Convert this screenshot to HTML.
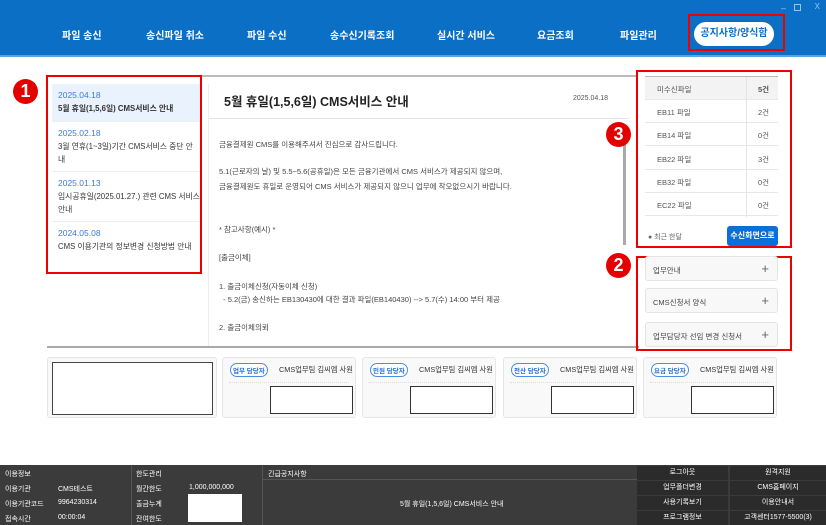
<!DOCTYPE html>
<html><head><meta charset="utf-8"><style>
*{margin:0;padding:0;box-sizing:border-box}
body{width:826px;height:525px;position:relative;overflow:hidden;background:#fff;font-family:"Liberation Sans","Noto Sans CJK KR",sans-serif;color:#333}
.a{position:absolute}
.nav{left:0;top:0;width:826px;height:57px;background:#0b70c5;border-bottom:2px solid #5aa2e0}
.ni{position:absolute;top:27px;color:#fff;font-size:10px;font-weight:bold;white-space:nowrap}
.red{border:2px solid #e00;position:absolute}
.badge{position:absolute;width:25px;height:25px;border-radius:50%;background:#e50000;color:#fff;font-weight:bold;font-size:18px;text-align:center;line-height:25px}
.li{position:absolute;left:52px;width:148px;font-size:7.8px;line-height:13px;padding:5px 4px 5px 6px;border-bottom:1px solid #eee;white-space:nowrap;overflow:hidden}
.li .d{color:#3a7bd5;font-size:8.5px}
.ct{font-size:7.5px;color:#444;position:absolute;left:219px;white-space:nowrap}
.tr{position:absolute;left:645px;width:133px;height:23px;border-bottom:1px solid #e8e8e8;font-size:7.5px;color:#555}
.tr span{position:absolute;top:7px}
.acc{position:absolute;left:645px;width:133px;height:25px;border:1px solid #e4e4e4;border-radius:3px;background:#f8f8f8;font-size:7.5px;color:#444;padding:8px 0 0 7px}
.acc b{position:absolute;right:8px;top:4px;font-weight:normal;font-size:13px;color:#666}
.card{position:absolute;top:357px;height:61px;border:1px solid #e6e6e6;border-radius:3px;background:#f9f9f9}
.pill{position:absolute;left:7px;top:5px;border:1px solid #4a8ee0;border-radius:7px;color:#2a6fc9;font-size:6.5px;padding:1px 2px;background:#fff;font-weight:bold}
.cn{position:absolute;left:56px;top:7px;font-size:7.3px;color:#333;white-space:nowrap}
.dl{position:absolute;left:6px;right:6px;top:24px;border-top:1px dotted #ddd}
.ib{position:absolute;right:2px;top:28px;width:83px;height:28px;border:1px solid #333;background:#fff}
.ft{left:0;top:465px;width:826px;height:60px;background:#3b3b3b;color:#fff;font-size:7px}
.fc{position:absolute;white-space:nowrap}
.fb{position:absolute;background:#2b2b2b;text-align:center;line-height:14px;color:#fff;font-size:7px}
</style></head><body>
<div class="a nav">
<div class="a" style="right:40px;top:3px;color:#9cc4ea;font-size:9px">–</div>
<div class="a" style="right:25px;top:4px;width:7px;height:7px;border:1px solid #9cc4ea"></div>
<div class="a" style="right:6px;top:2px;color:#9cc4ea;font-size:8px">X</div>
<div class="ni" style="left:62px">파일 송신</div>
<div class="ni" style="left:146px">송신파일 취소</div>
<div class="ni" style="left:247px">파일 수신</div>
<div class="ni" style="left:330px">송수신기록조회</div>
<div class="ni" style="left:437px">실시간 서비스</div>
<div class="ni" style="left:537px">요금조회</div>
<div class="ni" style="left:620px">파일관리</div>
<div class="a" style="left:694px;top:22px;width:80px;height:24px;background:#fff;border-radius:12px;color:#0b70c5;font-size:10px;font-weight:bold;text-align:center;line-height:24px">공지사항/양식함</div>
<div class="red" style="left:688px;top:14px;width:97px;height:37px"></div>
</div>

<div class="badge" style="left:13px;top:79px">1</div>
<div class="red" style="left:46px;top:75px;width:156px;height:199px"></div>
<div class="li" style="top:84px;background:#eaf2fd;height:38px"><div class="d">2025.04.18</div><b>5월 휴일(1,5,6일) CMS서비스 안내</b></div>
<div class="li" style="top:122px;height:50px"><div class="d">2025.02.18</div>3월 연휴(1~3일)기간 CMS서비스 중단 안<br>내</div>
<div class="li" style="top:172px;height:50px"><div class="d">2025.01.13</div>임시공휴일(2025.01.27.) 관련 CMS 서비스<br>안내</div>
<div class="li" style="top:222px;height:40px;border:0"><div class="d">2024.05.08</div>CMS 이용기관의 정보변경 신청방법 안내</div>

<div class="a" style="left:202px;top:75px;width:436px;border-top:2px solid #bbb"></div>
<div class="a" style="left:208px;top:84px;width:1px;height:262px;background:#eee"></div>
<div class="a" style="left:224px;top:91px;font-size:12.5px;font-weight:bold;color:#222">5월 휴일(1,5,6일) CMS서비스 안내</div>
<div class="a" style="left:573px;top:95px;font-size:7px;color:#555">2025.04.18</div>
<div class="a" style="left:209px;top:118px;width:420px;border-top:1px solid #e4e4e4"></div>
<div class="ct" style="top:139px">금융결제원 CMS를 이용해주셔서 진심으로 감사드립니다.</div>
<div class="ct" style="top:166px">5.1(근로자의 날) 및 5.5~5.6(공휴일)은 모든 금융기관에서 CMS 서비스가 제공되지 않으며,</div>
<div class="ct" style="top:181px">금융결제원도 휴일로 운영되어 CMS 서비스가 제공되지 않으니 업무에 착오없으시기 바랍니다.</div>
<div class="ct" style="top:224px">* 참고사항(예시) *</div>
<div class="ct" style="top:252px">[출금이체]</div>
<div class="ct" style="top:281px">1. 출금이체신청(자동이체 신청)</div>
<div class="ct" style="top:294px">&nbsp;&nbsp;- 5.2(금) 송신하는 EB130430에 대한 결과 파일(EB140430) --&gt; 5.7(수) 14:00 부터 제공</div>
<div class="ct" style="top:322px">2. 출금이체의뢰</div>
<div class="a" style="left:623px;top:145px;width:3px;height:100px;background:#aaa"></div>
<div class="a" style="left:47px;top:346px;width:592px;border-top:2px solid #aaa"></div>

<div class="badge" style="left:606px;top:122px">3</div>
<div class="red" style="left:636px;top:70px;width:156px;height:178px"></div>
<div class="a" style="left:645px;top:76px;width:133px;border-top:2px solid #bbb"></div>
<div class="tr" style="top:77px;background:#f3f3f3"><span style="left:12px">미수신파일</span><span style="left:113px;font-weight:bold">5건</span></div>
<div class="tr" style="top:100px"><span style="left:12px">EB11 파일</span><span style="left:113px">2건</span></div>
<div class="tr" style="top:123px"><span style="left:12px">EB14 파일</span><span style="left:113px">0건</span></div>
<div class="tr" style="top:147px"><span style="left:12px">EB22 파일</span><span style="left:113px">3건</span></div>
<div class="tr" style="top:170px"><span style="left:12px">EB32 파일</span><span style="left:113px">0건</span></div>
<div class="tr" style="top:193px"><span style="left:12px">EC22 파일</span><span style="left:113px">0건</span></div>
<div class="a" style="left:746px;top:77px;width:1px;height:140px;background:#e4e4e4"></div>
<div class="a" style="left:648px;top:232px;font-size:7px;color:#666">● 최근 한달</div>
<div class="a" style="left:727px;top:226px;width:51px;height:20px;background:#0b6fd8;border-radius:3px;color:#fff;font-size:8px;font-weight:bold;text-align:center;line-height:20px">수신화면으로</div>

<div class="badge" style="left:606px;top:253px">2</div>
<div class="red" style="left:636px;top:256px;width:156px;height:95px"></div>
<div class="acc" style="top:256px">업무안내<b>+</b></div>
<div class="acc" style="top:288px">CMS신청서 양식<b>+</b></div>
<div class="acc" style="top:322px">업무담당자 선임 변경 신청서<b>+</b></div>

<div class="card" style="left:47px;width:170px"><div class="a" style="left:4px;top:4px;width:161px;height:53px;border:1px solid #444;background:#fff"></div></div>
<div class="card" style="left:222px;width:134px"><div class="pill">업무 담당자</div><div class="cn">CMS업무팀 김씨엠 사원</div><div class="dl"></div><div class="ib"></div></div>
<div class="card" style="left:362px;width:134px"><div class="pill">민원 담당자</div><div class="cn">CMS업무팀 김씨엠 사원</div><div class="dl"></div><div class="ib"></div></div>
<div class="card" style="left:503px;width:134px"><div class="pill">전산 담당자</div><div class="cn">CMS업무팀 김씨엠 사원</div><div class="dl"></div><div class="ib"></div></div>
<div class="card" style="left:643px;width:134px"><div class="pill">요금 담당자</div><div class="cn">CMS업무팀 김씨엠 사원</div><div class="dl"></div><div class="ib"></div></div>

<div class="a ft">
<div class="fc" style="left:5px;top:4px">이용정보</div>
<div class="fc" style="left:5px;top:19px">이용기관</div><div class="fc" style="left:58px;top:19px">CMS테스트</div>
<div class="fc" style="left:5px;top:34px">이용기관코드</div><div class="fc" style="left:58px;top:34px">9964230314</div>
<div class="fc" style="left:5px;top:49px">접속시간</div><div class="fc" style="left:58px;top:49px">00:00:04</div>
<div class="fc" style="left:136px;top:4px">한도관리</div>
<div class="fc" style="left:136px;top:19px">월간한도</div><div class="fc" style="left:189px;top:19px">1,000,000,000</div>
<div class="fc" style="left:136px;top:34px">출금누계</div>
<div class="fc" style="left:136px;top:49px">잔여한도</div>
<div class="a" style="left:188px;top:29px;width:54px;height:28px;background:#fff"></div>
<div class="fc" style="left:268px;top:4px">긴급공지사항</div>
<div class="fc" style="left:400px;top:34px">5월 휴일(1,5,6일) CMS서비스 안내</div>
<div class="a" style="left:131px;top:0;width:1px;height:60px;background:#555"></div>
<div class="a" style="left:262px;top:0;width:1px;height:60px;background:#555"></div>
<div class="a" style="left:262px;top:14px;width:375px;height:1px;background:#555"></div>
<div class="fb" style="left:637px;top:1px;width:91px">로그아웃</div><div class="fb" style="left:730px;top:1px;width:96px">원격지원</div>
<div class="fb" style="left:637px;top:16px;width:91px">업무폴더변경</div><div class="fb" style="left:730px;top:16px;width:96px">CMS홈페이지</div>
<div class="fb" style="left:637px;top:31px;width:91px">사용기록보기</div><div class="fb" style="left:730px;top:31px;width:96px">이용안내서</div>
<div class="fb" style="left:637px;top:46px;width:91px">프로그램정보</div><div class="fb" style="left:730px;top:46px;width:96px">고객센터1577-5500(3)</div>
</div>
</body></html>
